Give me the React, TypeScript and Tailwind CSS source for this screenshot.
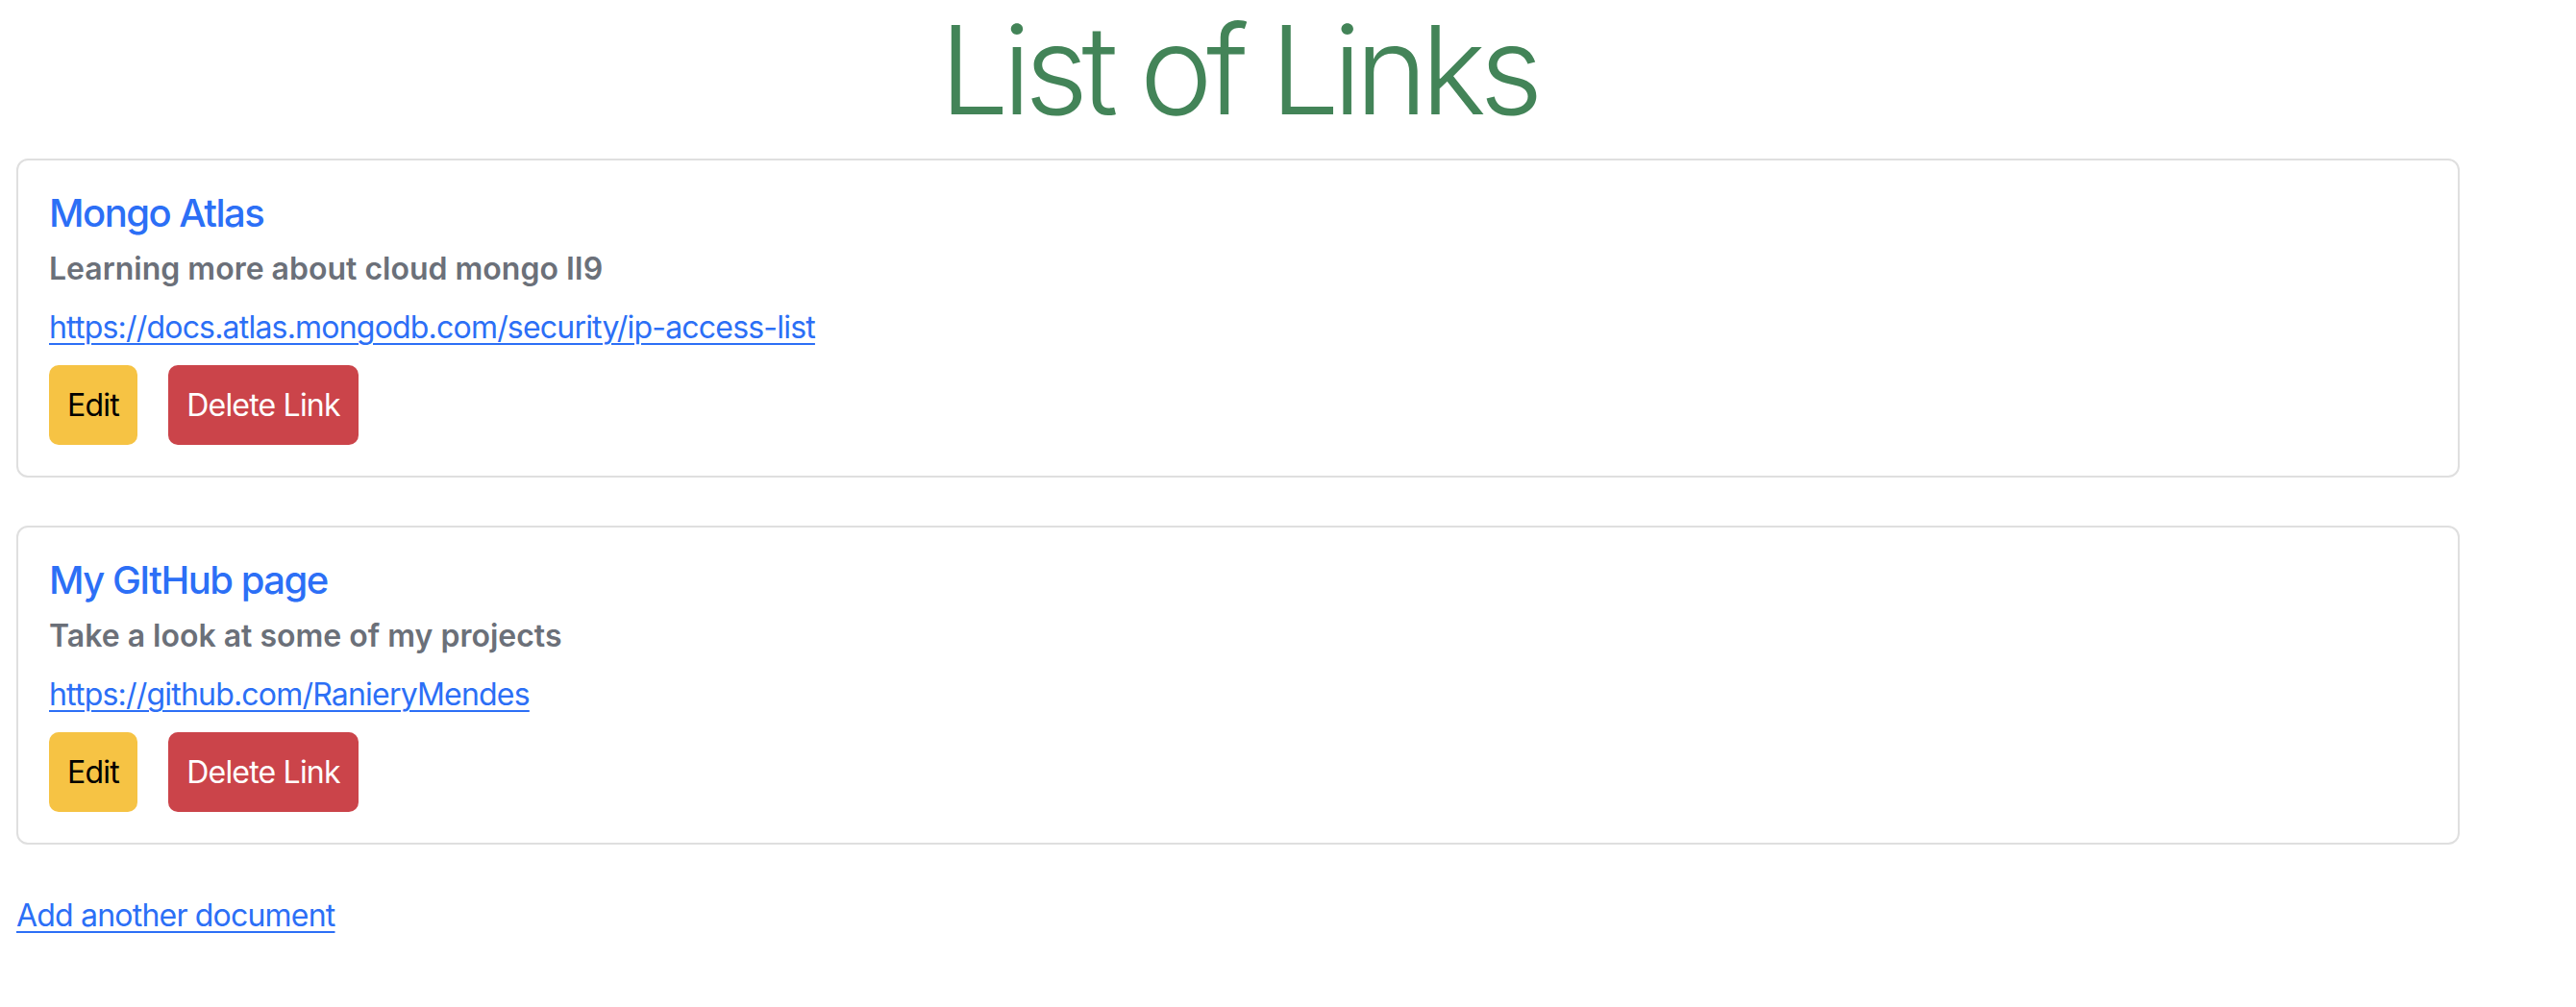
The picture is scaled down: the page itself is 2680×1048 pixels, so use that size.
import React from "react";

type LinkItem = { title: string; subtitle: string; url: string };

const links: LinkItem[] = [
  {
    title: "Mongo Atlas",
    subtitle: "Learning more about cloud mongo II9",
    url: "https://docs.atlas.mongodb.com/security/ip-access-list",
  },
  {
    title: "My GItHub page",
    subtitle: "Take a look at some of my projects",
    url: "https://github.com/RanieryMendes",
  },
];

function Card({ item }: { item: LinkItem }) {
  return (
    <div className="mb-[50px] rounded-[12px] border-2 border-[#dfdfdf] bg-white p-[32px]">
      <h5 className="text-[40px] leading-[45px] font-medium tracking-[-1.5px] text-[#2c6ff6]">{item.title}</h5>
      <h6 className="mt-[17px] text-[32px] leading-[38px] font-semibold text-[#6b7079]">{item.subtitle}</h6>
      <div className="mt-[18px] text-[32px] leading-[48px] tracking-[-0.8px]">
        <a
          href={item.url}
          className="text-[#2c6ff6] underline decoration-2 underline-offset-[5px]"
        >
          {item.url}
        </a>
      </div>
      <div className="mt-[15px] flex gap-[32px]">
        <button className="flex h-[83px] w-[92px] items-center justify-center rounded-[10px] bg-[#f6c344] text-[32px] tracking-[-0.8px] text-black">
          Edit
        </button>
        <button className="flex h-[83px] w-[198px] items-center justify-center rounded-[10px] bg-[#cb444a] text-[32px] tracking-[-0.8px] text-white">
          Delete Link
        </button>
      </div>
    </div>
  );
}

export default function App() {
  return (
    <div
      className="min-h-screen bg-white"
      style={{ fontFamily: "Inter, 'Noto Sans', sans-serif" }}
    >
      <div className="ml-[17px] w-[2542px]">
        <h1 className="pt-[9px] mb-[28px] text-center text-[128px] leading-[128px] font-light tracking-[-6.8px] text-[#438458]">
          List of Links
        </h1>
        {links.map((l) => (
          <Card key={l.url} item={l} />
        ))}
        <div className="mt-[1px] text-[32px] leading-[48px] tracking-[-0.8px]">
          <a href="#" className="text-[#2c6ff6] underline decoration-2 underline-offset-[5px]">
            Add another document
          </a>
        </div>
      </div>
    </div>
  );
}
